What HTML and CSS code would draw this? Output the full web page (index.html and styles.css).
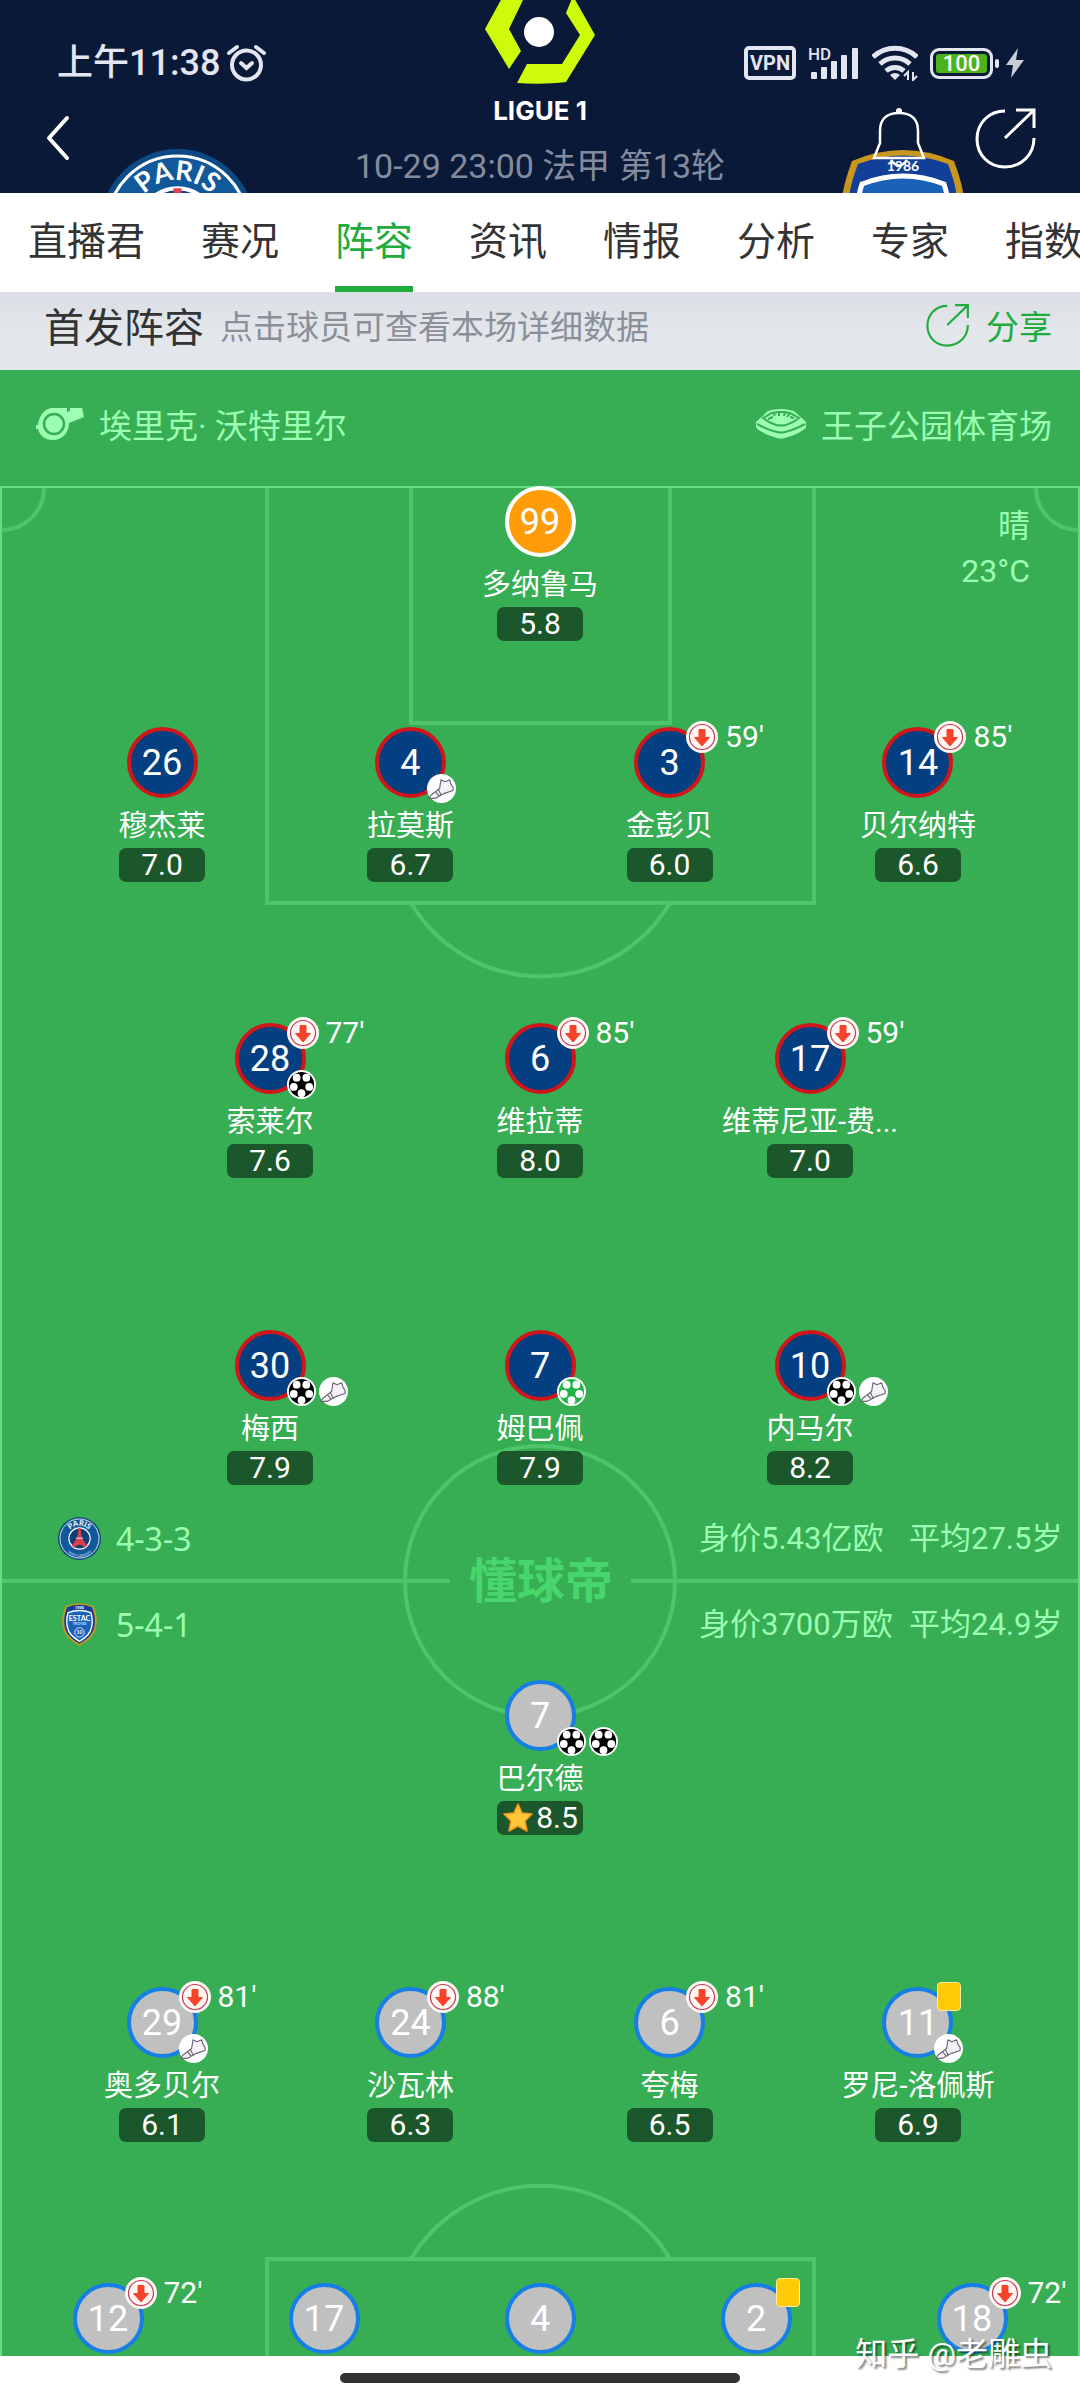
FILE: index.html
```html
<!DOCTYPE html>
<html lang="zh-CN">
<head>
    <meta charset="UTF-8">
    <meta name="viewport" content="width=device-width, initial-scale=1.0">
    <title>阵容</title>
    <link rel="stylesheet" href="styles.css">
</head>
<body>

<!-- shared icons -->
<svg class="sprite" aria-hidden="true">
    <symbol id="ball" viewBox="0 0 30 30">
        <circle cx="15" cy="15" r="15" fill="#fff"/>
        <circle cx="15" cy="15" r="13" fill="currentColor"/>
        <g fill="#fff">
            <circle cx="10" cy="8" r="4"/>
            <circle cx="20" cy="8" r="4"/>
            <circle cx="23" cy="17.500" r="4"/>
            <circle cx="15" cy="24" r="4"/>
            <circle cx="7" cy="17.500" r="4"/>
        </g>
    </symbol>
    <symbol id="boot" viewBox="0 0 30 30">
        <circle cx="15" cy="15" r="15" fill="#fff"/>
        <path d="M2 25.500L4 22l9-7 1.500-9 4 2 5-2 1 4 2.500 4v3l-9 3-9 5zM9 18.500l4 5M12 16.500l3 6" fill="#f6f3f8" stroke="#6d6672" stroke-width="1.200" stroke-linejoin="round"/>
    </symbol>
    <symbol id="off" viewBox="0 0 32 32">
        <circle cx="16" cy="16" r="16" fill="#fff8f5"/>
        <circle cx="16" cy="16" r="12.500" fill="none" stroke="#c33a50" stroke-width="1.200"/>
        <path d="M13 8.500h6v8h4.500L16 25l-7.500-8.500H13z" fill="#f7432a" stroke="#f7432a" stroke-linejoin="round"/>
    </symbol>
    <symbol id="share" viewBox="0 0 62 62">
        <path d="M30 4C14 4 2 16 2 32s12 28 28 28 29-12 29-29M41 3h18v18M59 3L30 31" fill="none" stroke="currentColor" stroke-width="3"/>
    </symbol>
    <symbol id="psg" viewBox="0 0 154 154">
        <circle cx="77" cy="77" r="77" fill="#0c4a86"/>
        <circle cx="77" cy="77" r="70" fill="#12599b" stroke="#fff" stroke-width="3"/>
        <circle cx="77" cy="77" r="38" fill="#0f3f7b" stroke="#fff" stroke-width="4"/>
        <path d="M73 39h8c0 26 6 44 24 63l-10 8c-8-14-28-14-36 0l-10-8c18-19 24-37 24-63z" fill="#e0404d"/>
        <path d="M64 76h26" stroke="#fff" stroke-width="3"/>
        <path id="psg-arc" d="M31 77a46 46 0 0 1 92 0" fill="none"/>
        <path id="psg-arc-low" d="M18 84a59 59 0 0 0 118 0" fill="none"/>
        <text class="crest-text" font-size="27" fill="#fff" text-anchor="middle"><textPath href="#psg-arc" startOffset="50%">PARIS</textPath></text>
        <text class="crest-text" font-size="12" fill="#a9c7e4" text-anchor="middle"><textPath href="#psg-arc-low" startOffset="50%">SAINT-GERMAIN</textPath></text>
    </symbol>
    <symbol id="troyes" viewBox="0 0 126 155">
        <path d="M12 12Q63-10 114 12C122 34 126 50 125 72c-2 42-26 62-62 83C27 134 3 114 1 72 0 50 4 34 12 12z" fill="#c9961e"/>
        <path d="M18 15Q63-2 108 15C116 36 119 52 118 72c-2 38-22 55-55 75C30 127 10 110 8 72 7 52 10 36 18 15z" fill="#123f98"/>
        <path d="M22 35q41-16 82 0c6 18 6 34 3 50-5 26-19 38-44 53C38 123 24 111 19 85c-3-16-3-32 3-50z" fill="#1a62b8" stroke="#fff" stroke-width="5"/>
        <text class="crest-text" x="63" y="22" font-size="14" fill="#fff" text-anchor="middle">1986</text>
        <text class="crest-text" x="63" y="65" font-size="26" fill="#fff" text-anchor="middle">ESTAC</text>
        <text class="crest-text" x="63" y="81" font-size="13" fill="#cfe2f8" text-anchor="middle">TROYES</text>
        <circle cx="63" cy="106" r="17" fill="none" stroke="#fff" stroke-width="3"/>
        <text class="crest-text" x="63" y="113" font-size="18" fill="#fff" text-anchor="middle">10</text>
    </symbol>
</svg>

<header class="header">
    <svg class="crest crest-home"><use href="#psg"/></svg>
    <svg class="crest crest-away"><use href="#troyes"/></svg>

    <div class="status">
        <span class="clock">上午11:38</span>
        <svg width="41" height="38" viewBox="0 0 41 38" fill="none" stroke="#e3e5f1" stroke-linecap="round">
            <circle cx="20.500" cy="21" r="14.500" stroke-width="4"/>
            <path d="M15 19l5.500 5 5.500-5" stroke-width="4"/>
            <path d="M3 9l8-6M38 9l-8-6" stroke-width="4"/>
        </svg>
        <div class="status-right">
            <span class="vpn">VPN</span>
            <svg width="52" height="34" viewBox="0 0 52 34" fill="#e3e5f1">
                <text class="hd" x="0" y="14">HD</text>
                <rect x="3" y="26" width="6" height="7" rx="1"/>
                <rect x="13" y="21" width="6" height="12" rx="1"/>
                <rect x="23" y="15" width="6" height="18" rx="1"/>
                <rect x="33" y="9" width="6" height="24" rx="1"/>
                <rect x="44" y="2" width="6" height="31" rx="1"/>
            </svg>
            <svg width="46" height="36" viewBox="0 0 46 36" fill="none" stroke="#e3e5f1" stroke-width="5">
                <path d="M1 12a32 32 0 0 1 44 0M8 19a22 22 0 0 1 30 0M14 26a13 13 0 0 1 18 0"/>
                <path d="M23 35l-5-5a8 8 0 0 1 10 0z" fill="#e3e5f1" stroke="none"/>
                <path d="M36 35v-8l-4 4M41 27v8l4-4" stroke-width="2"/>
            </svg>
            <span class="battery">100</span>
            <svg width="20" height="32" viewBox="0 0 20 32" fill="#c9ccd8">
                <path d="M13 1L1 18h7L6 31l13-18h-8z"/>
            </svg>
        </div>
    </div>

    <div class="league">
        <svg width="110" height="92" viewBox="0 0 110 92">
            <g fill="#cdfb0a">
                <path d="M17-2h22L24 29l12 22-12 18L0 29z"/>
                <path d="M42 64h35l18-29-14-22L88-4l22 39-29 47c-15 2-33 2-49 1z"/>
            </g>
            <circle cx="54" cy="32" r="15" fill="#fff"/>
        </svg>
        <strong class="league-name">LIGUE 1</strong>
        <span class="kickoff">10-29 23:00 法甲 第13轮</span>
    </div>

    <div class="nav">
        <button class="icon-button" aria-label="返回">
            <svg width="24" height="46" viewBox="0 0 24 46"><path d="M21 3L3 23l18 20" fill="none" stroke="#fff" stroke-width="4" stroke-linecap="round" stroke-linejoin="round"/></svg>
        </button>
        <div class="nav-right">
            <button class="icon-button" aria-label="提醒">
                <svg width="54" height="62" viewBox="0 0 54 62" fill="none" stroke="#fff" stroke-width="2.500">
                    <circle cx="27" cy="4" r="3" fill="#fff" stroke="none"/>
                    <path d="M2 51l6-15V24C8 12 15 6 27 6s19 6 19 18v12l6 15zM19 53q8 11 16 0"/>
                </svg>
            </button>
            <button class="icon-button" aria-label="分享比赛">
                <svg width="62" height="62"><use href="#share"/></svg>
            </button>
        </div>
    </div>
</header>

<nav class="tabs">
    <a href="#">直播君</a>
    <a href="#">赛况</a>
    <a href="#" class="active">阵容</a>
    <a href="#">资讯</a>
    <a href="#">情报</a>
    <a href="#">分析</a>
    <a href="#">专家</a>
    <a href="#">指数</a>
</nav>

<section class="title-bar">
    <h1>首发阵容</h1>
    <span class="hint">点击球员可查看本场详细数据</span>
    <button class="share">
        <svg width="44" height="44"><use href="#share"/></svg>
        分享
    </button>
</section>

<main class="lineup">
    <div class="venue">
        <svg width="48" height="32" viewBox="0 0 48 32">
            <path d="M17 0h14v4l3-1V0h12l2 9-15 6c0 10-7 17-16 17C9 32 4 28 2 21H0v-4h2C3 7 9 0 17 0z" fill="#9cffb3"/>
            <circle cx="18" cy="16" r="10" fill="#9cffb3" stroke="#37ae53" stroke-width="2.500"/>
        </svg>
        <span>埃里克· 沃特里尔</span>
        <div class="stadium">
            <svg width="50" height="30" viewBox="0 0 50 30">
                <path d="M0 13L12 2q13-4 26 0l12 11v5q-1 3-12 8l-9 3q-4 1-8 0l-9-3Q1 21 0 18z" fill="#9cffb3"/>
                <path d="M1 15q11 6 20 8 4 1 8 0 9-2 20-8" fill="none" stroke="#37ae53" stroke-width="2"/>
                <path d="M7 9l9-5q9-2 18 0l9 5q-6 5-13 7-5 1-10 0Q13 14 7 9z" fill="none" stroke="#37ae53" stroke-width="2"/>
                <path d="M12 10l5-2M17 3l2 4M23 3v4M29 3l-1 4M34 4l-3 4M38 9l-4-1" stroke="#37ae53" stroke-width="2"/>
            </svg>
            <span>王子公园体育场</span>
        </div>
    </div>

    <div class="pitch">
        <!-- pitch markings -->
        <svg class="markings" viewBox="0 0 1080 1870" preserveAspectRatio="xMidYMin slice" fill="none" stroke="#4ec56b" stroke-width="4">
            <path d="M267 0v417h547V0M411 0v237h259V0"/>
            <path d="M411 417a151 151 0 0 0 259 0"/>
            <path d="M2 44a42 42 0 0 0 42-42M1078 44a42 42 0 0 1-42-42"/>
            <circle cx="540" cy="1095" r="135"/>
            <path d="M2 1095h448M631 1095h447"/>
            <path d="M267 1880v-107h547v107M411 1773a151 151 0 0 1 259 0"/>
            <path d="M1 1870V1h1078v1869" stroke="#63de80" stroke-width="2"/>
            <text class="brand" x="541" y="1112" text-anchor="middle" stroke="none">懂球帝</text>
        </svg>

        <div class="weather">晴<br>23°C</div>

        <section class="team home">
            <div class="line keeper">
                <button class="player goalkeeper">
                    <span class="shirt">99</span>
                    <span class="name">多纳鲁马</span>
                    <span class="score">5.8</span>
                </button>
            </div>
            <div class="line four defence">
                <button class="player">
                    <span class="shirt">26</span>
                    <span class="name">穆杰莱</span>
                    <span class="score">7.0</span>
                </button>
                <button class="player">
                    <span class="shirt">4
                        <span class="events"><svg><use href="#boot"/></svg></span>
                    </span>
                    <span class="name">拉莫斯</span>
                    <span class="score">6.7</span>
                </button>
                <button class="player">
                    <span class="shirt">3
                        <span class="sub"><svg><use href="#off"/></svg>59'</span>
                    </span>
                    <span class="name">金彭贝</span>
                    <span class="score">6.0</span>
                </button>
                <button class="player">
                    <span class="shirt">14
                        <span class="sub"><svg><use href="#off"/></svg>85'</span>
                    </span>
                    <span class="name">贝尔纳特</span>
                    <span class="score">6.6</span>
                </button>
            </div>
            <div class="line three midfield">
                <button class="player">
                    <span class="shirt">28
                        <span class="sub"><svg><use href="#off"/></svg>77'</span>
                        <span class="events"><svg><use href="#ball"/></svg></span>
                    </span>
                    <span class="name">索莱尔</span>
                    <span class="score">7.6</span>
                </button>
                <button class="player">
                    <span class="shirt">6
                        <span class="sub"><svg><use href="#off"/></svg>85'</span>
                    </span>
                    <span class="name">维拉蒂</span>
                    <span class="score">8.0</span>
                </button>
                <button class="player">
                    <span class="shirt">17
                        <span class="sub"><svg><use href="#off"/></svg>59'</span>
                    </span>
                    <span class="name">维蒂尼亚-费...</span>
                    <span class="score">7.0</span>
                </button>
            </div>
            <div class="line three attack">
                <button class="player">
                    <span class="shirt">30
                        <span class="events"><svg><use href="#ball"/></svg><svg><use href="#boot"/></svg></span>
                    </span>
                    <span class="name">梅西</span>
                    <span class="score">7.9</span>
                </button>
                <button class="player">
                    <span class="shirt">7
                        <span class="events"><svg class="penalty"><use href="#ball"/></svg></span>
                    </span>
                    <span class="name">姆巴佩</span>
                    <span class="score">7.9</span>
                </button>
                <button class="player">
                    <span class="shirt">10
                        <span class="events"><svg><use href="#ball"/></svg><svg><use href="#boot"/></svg></span>
                    </span>
                    <span class="name">内马尔</span>
                    <span class="score">8.2</span>
                </button>
            </div>
            <div class="club">
                <svg class="badge"><use href="#psg"/></svg>
                <span class="formation">4-3-3</span>
                <span class="worth">身价5.43亿欧</span>
                <span class="age">平均27.5岁</span>
            </div>
        </section>

        <section class="team away">
            <div class="club">
                <svg class="badge"><use href="#troyes"/></svg>
                <span class="formation">5-4-1</span>
                <span class="worth">身价3700万欧</span>
                <span class="age">平均24.9岁</span>
            </div>
            <div class="line striker">
                <button class="player">
                    <span class="shirt">7
                        <span class="events"><svg><use href="#ball"/></svg><svg><use href="#ball"/></svg></span>
                    </span>
                    <span class="name">巴尔德</span>
                    <span class="score best">
                        <svg width="32" height="32" viewBox="0 0 32 32"><path d="M16 2l4 9 10 1-7 7 2 10-9-5-9 5 2-10-7-7 10-1z" fill="#ffc83a" stroke="#f79a1c" stroke-width="1.500" stroke-linejoin="round"/></svg>
                        8.5
                    </span>
                </button>
            </div>
            <div class="line four attack">
                <button class="player">
                    <span class="shirt">29
                        <span class="sub"><svg><use href="#off"/></svg>81'</span>
                        <span class="events"><svg><use href="#boot"/></svg></span>
                    </span>
                    <span class="name">奥多贝尔</span>
                    <span class="score">6.1</span>
                </button>
                <button class="player">
                    <span class="shirt">24
                        <span class="sub"><svg><use href="#off"/></svg>88'</span>
                    </span>
                    <span class="name">沙瓦林</span>
                    <span class="score">6.3</span>
                </button>
                <button class="player">
                    <span class="shirt">6
                        <span class="sub"><svg><use href="#off"/></svg>81'</span>
                    </span>
                    <span class="name">夸梅</span>
                    <span class="score">6.5</span>
                </button>
                <button class="player">
                    <span class="shirt">11
                        <span class="card"></span>
                        <span class="events"><svg><use href="#boot"/></svg></span>
                    </span>
                    <span class="name">罗尼-洛佩斯</span>
                    <span class="score">6.9</span>
                </button>
            </div>
            <div class="line five midfield">
                <button class="player">
                    <span class="shirt">12
                        <span class="sub"><svg><use href="#off"/></svg>72'</span>
                    </span>
                </button>
                <button class="player"><span class="shirt">17</span></button>
                <button class="player"><span class="shirt">4</span></button>
                <button class="player">
                    <span class="shirt">2
                        <span class="card"></span>
                    </span>
                </button>
                <button class="player">
                    <span class="shirt">18
                        <span class="sub"><svg><use href="#off"/></svg>72'</span>
                    </span>
                </button>
            </div>
        </section>
    </div>
    <div class="watermark">知乎 @老雕虫</div>
</main>

<footer class="gesture"><span></span></footer>

</body>
</html>
```
FILE: styles.css
```css
* {
    box-sizing: border-box;
}
body {
    margin: 0;
    background-color: white;
    font-family: Roboto, "Noto Sans CJK SC", sans-serif;
    overflow-x: hidden;
}
button {
    padding: 0;
    border: 0;
    background: none;
    color: inherit;
    font: inherit;
}
svg {
    display: block;
    flex: none;
}
.sprite {
    display: none;
}
.crest-text {
    font-family: Lato, sans-serif;
    font-weight: 700;
}

/* header */
.header {
    position: relative;
    overflow: hidden;
    padding: 44px 43px 24px 46px;
    background-color: #0a1938;
    color: white;
}
.crest {
    position: absolute;
    top: 149px;
    height: 155px;
}
.crest-home {
    left: 100px;
    width: 155px;
}
.crest-away {
    right: 114px;
    width: 126px;
}
.status {
    display: flex;
    align-items: center;
    gap: 6px;
    height: 38px;
    padding-left: 11px;
    color: #e3e5f1;
}
.clock {
    font-size: 36px;
    font-weight: 500;
    line-height: 32px;
}
.status-right {
    display: flex;
    align-items: center;
    gap: 12px;
    margin-left: auto;
    margin-right: 12px;
}
.vpn {
    width: 52px;
    border: 4px solid #e3e5f1;
    border-radius: 5px;
    font-size: 20px;
    font-weight: 700;
    line-height: 26px;
    text-align: center;
}
.hd {
    font-size: 17px;
    font-weight: 500;
}
.battery {
    position: relative;
    width: 63px;
    border: 3px solid #e3e5f1;
    border-radius: 9px;
    background-color: #4cb31a;
    box-shadow: inset 0 0 0 3px #0a1938;
    color: white;
    font-size: 22px;
    font-weight: 500;
    line-height: 25px;
    text-align: center;
}
.battery::after {
    content: "";
    position: absolute;
    top: 8px;
    right: -9px;
    width: 4px;
    height: 9px;
    border-radius: 2px;
    background-color: #e3e5f1;
}
.league {
    position: absolute;
    top: 0;
    left: 0;
    right: 0;
    display: flex;
    flex-direction: column;
    align-items: center;
}
.league-name {
    font-family: Inter, sans-serif;
    font-size: 26px;
    line-height: 38px;
}
.kickoff {
    color: #848b9e;
    font-size: 34px;
    line-height: 72px;
}
.nav {
    position: relative;
    display: flex;
    align-items: center;
    justify-content: space-between;
    height: 62px;
    margin-top: 25px;
}
.nav-right {
    display: flex;
    gap: 49px;
}

/* tabs */
.tabs {
    display: flex;
    gap: 56px;
    height: 99px;
    padding-left: 28px;
    overflow: hidden;
}
.tabs a {
    flex: none;
    border-bottom: 6px solid transparent;
    color: #333;
    font-size: 39px;
    line-height: 98px;
    text-decoration: none;
}
.tabs .active {
    border-color: #1fac3d;
    color: #1fac3d;
}

.title-bar {
    display: flex;
    align-items: center;
    height: 78px;
    padding: 0 28px 12px 44px;
    background: linear-gradient(#dbdfe5, #e3e7ec 40px);
}
.title-bar h1 {
    margin: 0 16px 0 0;
    color: #333;
    font-size: 40px;
    font-weight: 400;
}
.hint {
    color: #8b9098;
    font-size: 33px;
}
.share {
    display: flex;
    align-items: center;
    gap: 16px;
    margin-left: auto;
    color: #1fac3d;
    font-size: 33px;
}

/* lineup */
.lineup {
    position: relative;
    background-color: #37ae53;
    color: white;
}
.venue {
    display: flex;
    align-items: center;
    gap: 15px;
    height: 116px;
    padding: 0 28px 8px 36px;
    color: #9cffb3;
    font-size: 33px;
}
.stadium {
    display: flex;
    align-items: center;
    gap: 15px;
    margin-left: auto;
}
.pitch {
    position: relative;
    padding-bottom: 2px;
}
.markings {
    position: absolute;
    width: 100%;
    height: 100%;
}
.brand {
    fill: #48d56b;
    font-size: 48px;
    font-weight: 700;
}
.weather {
    position: absolute;
    top: 18px;
    right: 50px;
    color: #9cffb3;
    font-size: 32px;
    line-height: 45px;
    text-align: right;
}
.team {
    position: relative;
}
.home {
    padding-bottom: 21px;
}
.away {
    padding-top: 22px;
}
.line {
    display: flex;
    justify-content: center;
}
.home .defence {
    margin-top: 86px;
}
.midfield {
    margin-top: 141px;
}
.attack {
    margin-top: 152px;
}
.player {
    display: flex;
    flex-direction: column;
    align-items: center;
    width: 25%;
}
.four .player {
    width: 23%;
}
.four .player:nth-child(3) {
    margin-left: 1%;
}
.five .player {
    width: 20%;
}
.shirt {
    position: relative;
    width: 71px;
    height: 71px;
    border: 4px solid #cf161b;
    border-radius: 50%;
    background-color: #043f82;
    font-size: 36px;
    line-height: 64px;
}
.goalkeeper .shirt {
    border-color: white;
    background-color: #ff9c08;
}
.away .shirt {
    border-color: #157fe6;
    background-color: #c0c0c0;
}
.name {
    margin: 10px 0 4px;
    font-size: 29px;
    line-height: 36px;
    white-space: nowrap;
}
.score {
    width: 86px;
    height: 34px;
    border-radius: 7px;
    background-color: #1b572a;
    font-size: 30px;
    line-height: 34px;
}
.best {
    display: flex;
    align-items: center;
    justify-content: center;
    gap: 2px;
}

/* match events around the shirt */
.sub,
.events,
.card {
    position: absolute;
    left: 48px;
}
.sub {
    top: -10px;
    display: flex;
    align-items: center;
    gap: 7px;
    font-size: 30px;
    line-height: 32px;
}
.sub svg {
    width: 32px;
    height: 32px;
}
.events {
    top: 43px;
    display: flex;
    gap: 3px;
    color: black;
}
.events svg {
    width: 29px;
    height: 29px;
}
.events .penalty {
    color: #1fb446;
}
.card {
    top: -9px;
    width: 24px;
    height: 29px;
    margin-left: 3px;
    border: 1px solid #ffeb9c;
    border-radius: 4px;
    background-color: #ffcb05;
}

/* club info on both sides of the halfway line */
.club {
    display: flex;
    align-items: center;
    height: 43px;
    padding-left: 58px;
    color: #9cffb3;
    font-size: 32px;
    line-height: 40px;
    white-space: nowrap;
}
.home .club {
    margin-top: 32px;
}
.away .club {
    margin-bottom: 34px;
}
.badge {
    width: 43px;
    height: 43px;
}
.formation {
    margin-left: 15px;
    font-family: "Noto Sans", sans-serif;
}
.worth {
    width: 210px;
    margin-left: auto;
    font-size: 31px;
}
.age {
    width: 171px;
    font-size: 31px;
}
.watermark {
    position: absolute;
    right: 28px;
    bottom: -22px;
    font-size: 32px;
    line-height: 48px;
    text-shadow: 2px 2px 2px rgba(0, 0, 0, 0.5);
}
.gesture {
    padding: 17px 0;
}
.gesture span {
    display: block;
    width: 37%;
    height: 10px;
    margin: 0 auto;
    border-radius: 5px;
    background-color: #333;
}
```
